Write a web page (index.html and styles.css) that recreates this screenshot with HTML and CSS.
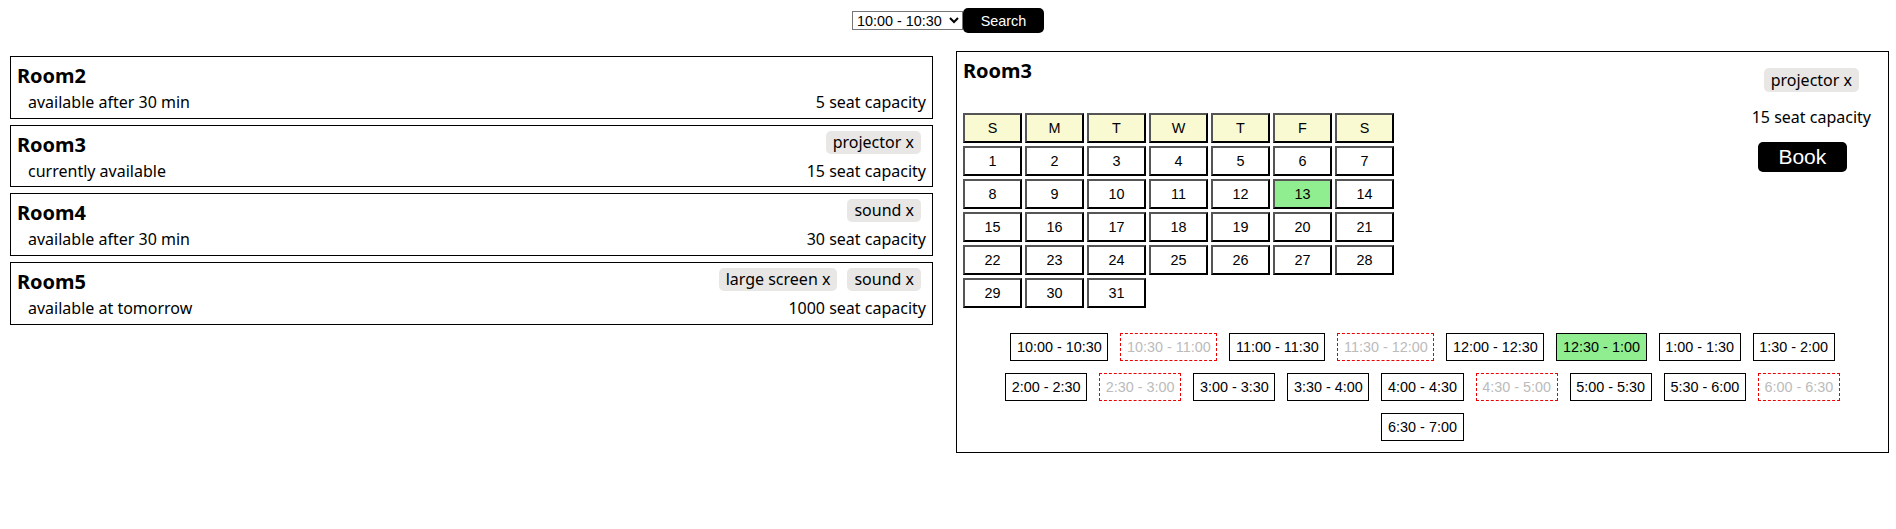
FILE: index.html
```html
<!DOCTYPE html>
<html>
<head>
<meta charset="utf-8">
<link rel="stylesheet" href="styles.css">
</head>
<body>
<div class="topbar">
  <select class="time-select">
    <option>10:00 - 10:30</option>
  </select>
  <button class="search-btn">Search</button>
</div>
<div class="main">
  <div class="room-list">
    <div class="card">
      <div class="card-left">
        <div class="room-name">Room2</div>
        <div class="room-status">available after 30 min</div>
      </div>
      <div class="card-right">
        <div class="tags"></div>
        <div class="capacity">5 seat capacity</div>
      </div>
    </div>
    <div class="card">
      <div class="card-left">
        <div class="room-name">Room3</div>
        <div class="room-status">currently available</div>
      </div>
      <div class="card-right">
        <div class="tags"><span class="tag">projector x</span></div>
        <div class="capacity">15 seat capacity</div>
      </div>
    </div>
    <div class="card">
      <div class="card-left">
        <div class="room-name">Room4</div>
        <div class="room-status">available after 30 min</div>
      </div>
      <div class="card-right">
        <div class="tags"><span class="tag">sound x</span></div>
        <div class="capacity">30 seat capacity</div>
      </div>
    </div>
    <div class="card">
      <div class="card-left">
        <div class="room-name">Room5</div>
        <div class="room-status">available at tomorrow</div>
      </div>
      <div class="card-right">
        <div class="tags"><span class="tag">large screen x</span><span class="tag">sound x</span></div>
        <div class="capacity">1000 seat capacity</div>
      </div>
    </div>
  </div>
  <div class="panel">
    <div class="panel-top">
      <div class="panel-left">
        <div class="room-name">Room3</div>
        <div class="calendar">
          <div class="cal-head">S</div><div class="cal-head">M</div><div class="cal-head">T</div><div class="cal-head">W</div><div class="cal-head">T</div><div class="cal-head">F</div><div class="cal-head">S</div>
          <div class="cal-day">1</div><div class="cal-day">2</div><div class="cal-day">3</div><div class="cal-day">4</div><div class="cal-day">5</div><div class="cal-day">6</div><div class="cal-day">7</div>
          <div class="cal-day">8</div><div class="cal-day">9</div><div class="cal-day">10</div><div class="cal-day">11</div><div class="cal-day">12</div><div class="cal-day selected">13</div><div class="cal-day">14</div>
          <div class="cal-day">15</div><div class="cal-day">16</div><div class="cal-day">17</div><div class="cal-day">18</div><div class="cal-day">19</div><div class="cal-day">20</div><div class="cal-day">21</div>
          <div class="cal-day">22</div><div class="cal-day">23</div><div class="cal-day">24</div><div class="cal-day">25</div><div class="cal-day">26</div><div class="cal-day">27</div><div class="cal-day">28</div>
          <div class="cal-day">29</div><div class="cal-day">30</div><div class="cal-day">31</div>
        </div>
      </div>
      <div class="panel-right">
        <span class="tag">projector x</span>
        <div class="panel-capacity">15 seat capacity</div>
        <button class="book-btn">Book</button>
      </div>
    </div>
    <div class="slots">
      <span class="slot">10:00 - 10:30</span>
      <span class="slot taken">10:30 - 11:00</span>
      <span class="slot">11:00 - 11:30</span>
      <span class="slot taken">11:30 - 12:00</span>
      <span class="slot">12:00 - 12:30</span>
      <span class="slot chosen">12:30 - 1:00</span>
      <span class="slot">1:00 - 1:30</span>
      <span class="slot">1:30 - 2:00</span>
      <span class="slot">2:00 - 2:30</span>
      <span class="slot taken">2:30 - 3:00</span>
      <span class="slot">3:00 - 3:30</span>
      <span class="slot">3:30 - 4:00</span>
      <span class="slot">4:00 - 4:30</span>
      <span class="slot taken">4:30 - 5:00</span>
      <span class="slot">5:00 - 5:30</span>
      <span class="slot">5:30 - 6:00</span>
      <span class="slot taken">6:00 - 6:30</span>
      <span class="slot">6:30 - 7:00</span>
    </div>
  </div>
</div>
</body>
</html>
```
FILE: styles.css
```css
body {
  margin: 8px 0 0 0;
  font-family: "Noto Sans", "Open Sans", sans-serif;
  color: #000;
  background: #fff;
}

.topbar {
  display: flex;
  justify-content: center;
  align-items: center;
  height: 25px;
}

.time-select {
  font-family: "Liberation Sans", Arial, sans-serif;
  font-size: 14.4px;
  width: 111px;
  height: 19px;
  padding: 0;
  border: 1px solid #767676;
  border-radius: 0;
  background: #fff;
  color: #000;
}

.search-btn {
  font-family: "Liberation Sans", Arial, sans-serif;
  font-size: 14.4px;
  width: 81px;
  height: 25px;
  background: #000;
  color: #fff;
  border: none;
  border-radius: 5px;
  padding: 0;
}

.main {
  display: flex;
  align-items: flex-start;
  gap: 23px;
  margin-top: 18px;
  padding: 0 7px 0 10px;
}

.room-list {
  flex: 0 0 923px;
  padding-top: 5px;
  display: flex;
  flex-direction: column;
  gap: 6px;
}

.card {
  border: 1px solid #000;
  padding: 5px 6px 3.67px 6px;
  display: flex;
  justify-content: space-between;
  align-items: flex-end;
}

.room-name {
  font-size: 20px;
  font-weight: 700;
  line-height: 28px;
}

.room-status {
  font-size: 16px;
  line-height: 24px;
  padding-left: 11px;
}

.card-right {
  display: flex;
  flex-direction: column;
  align-items: flex-end;
}

.tags {
  display: flex;
  height: 28px;
  align-items: flex-start;
}

.tag {
  display: inline-block;
  background: #e9e6e6;
  border-radius: 5px;
  font-size: 16px;
  line-height: 23px;
  padding: 0 7px;
  margin: 0 5px;
}

.capacity {
  font-size: 16px;
  line-height: 24px;
}

.panel {
  flex: 1;
  border: 1px solid #000;
  padding: 5px 6px 5px 6px;
}

.panel-top {
  display: flex;
  justify-content: space-between;
}

.calendar {
  margin-top: 28px;
  display: grid;
  grid-template-columns: repeat(7, 59px);
  grid-auto-rows: 30px;
  gap: 3px;
}

.cal-head,
.cal-day {
  box-sizing: border-box;
  border: 2px solid;
  border-color: #555 #000 #000 #555;
  display: flex;
  align-items: center;
  justify-content: center;
  font-family: "Liberation Sans", Arial, sans-serif;
  font-size: 14.4px;
}

.cal-head {
  background: #fafad2;
}

.cal-day.selected {
  background: #90ee90;
}

.panel-right {
  display: flex;
  flex-direction: column;
  align-items: center;
  padding-top: 11px;
  padding-right: 11px;
}

.panel-right .tag {
  line-height: 24px;
  margin: 0;
}

.panel-capacity {
  font-size: 16px;
  line-height: 24px;
  margin-top: 13px;
}

.book-btn {
  margin-top: 13px;
  margin-right: 18px;
  width: 89px;
  height: 30px;
  background: #000;
  color: #fff;
  border: none;
  border-radius: 5px;
  font-family: "Liberation Sans", Arial, sans-serif;
  font-size: 21px;
  padding: 0;
}

.slots {
  margin-top: 19px;
  display: flex;
  flex-wrap: wrap;
  justify-content: center;
}

.slot {
  display: inline-block;
  margin: 6px;
  padding: 5px 5.65px;
  border: 1px solid #000;
  font-family: "Liberation Sans", Arial, sans-serif;
  font-size: 14.4px;
  line-height: 16px;
}

.slot.taken {
  border: 1px dashed #e00;
  color: #bbb;
}

.slot.chosen {
  background: #90ee90;
}
```
